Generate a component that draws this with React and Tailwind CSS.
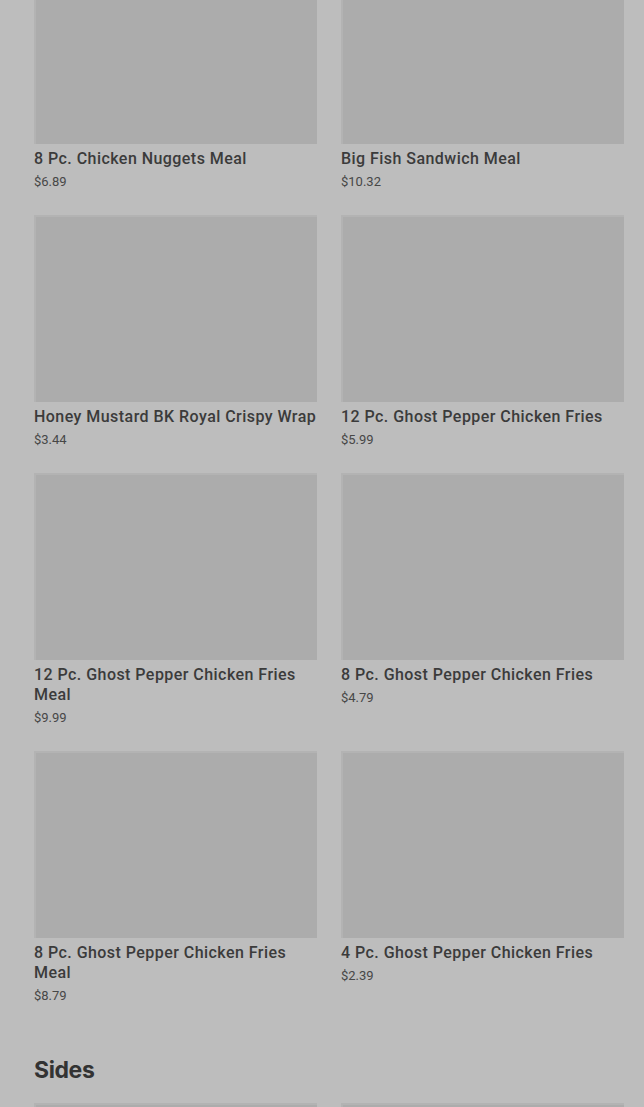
import React from "react";

const items = [
  { name: "8 Pc. Chicken Nuggets Meal", price: "$6.89" },
  { name: "Big Fish Sandwich Meal", price: "$10.32" },
  { name: "Honey Mustard BK Royal Crispy Wrap", price: "$3.44" },
  { name: "12 Pc. Ghost Pepper Chicken Fries", price: "$5.99" },
  { name: "12 Pc. Ghost Pepper Chicken Fries Meal", price: "$9.99" },
  { name: "8 Pc. Ghost Pepper Chicken Fries", price: "$4.79" },
  { name: "8 Pc. Ghost Pepper Chicken Fries Meal", price: "$8.79" },
  { name: "4 Pc. Ghost Pepper Chicken Fries", price: "$2.39" },
];

function Card({ name, price }) {
  return (
    <div className="flex flex-col">
      <div className="h-[187px] w-full bg-[#acacac] border-t-2 border-l-2 border-[#b3b3b3]" />
      <div className="mt-[5px] text-[16px] leading-[20px] font-medium text-[#3b3b3b] tracking-[0.45px]">
        {name}
      </div>
      <div className="mt-[5px] text-[13px] leading-[16px] text-[#474747]">{price}</div>
    </div>
  );
}

export default function App() {
  return (
    <div
      className="min-h-[1107px] w-[644px] bg-[#bdbdbd] overflow-hidden"
      style={{ fontFamily: "Roboto, 'Open Sans', sans-serif" }}
    >
      <div className="pl-[34px] pr-[20px] -mt-[43px]">
        <div className="grid grid-cols-2 gap-x-[24px] gap-y-[25px]">
          {items.map((it, i) => (
            <Card key={i} {...it} />
          ))}
        </div>
        <h2
          className="mt-[50px] text-[23px] leading-[32px] font-bold text-[#333333] tracking-[-0.4px]"
          style={{ fontFamily: "Inter, sans-serif" }}
        >
          Sides
        </h2>
        <div className="mt-[17px] grid grid-cols-2 gap-x-[24px]">
          <div className="h-[187px] bg-[#acacac] border-t-2 border-l-2 border-[#b3b3b3]" />
          <div className="h-[187px] bg-[#acacac] border-t-2 border-l-2 border-[#b3b3b3]" />
        </div>
      </div>
    </div>
  );
}
